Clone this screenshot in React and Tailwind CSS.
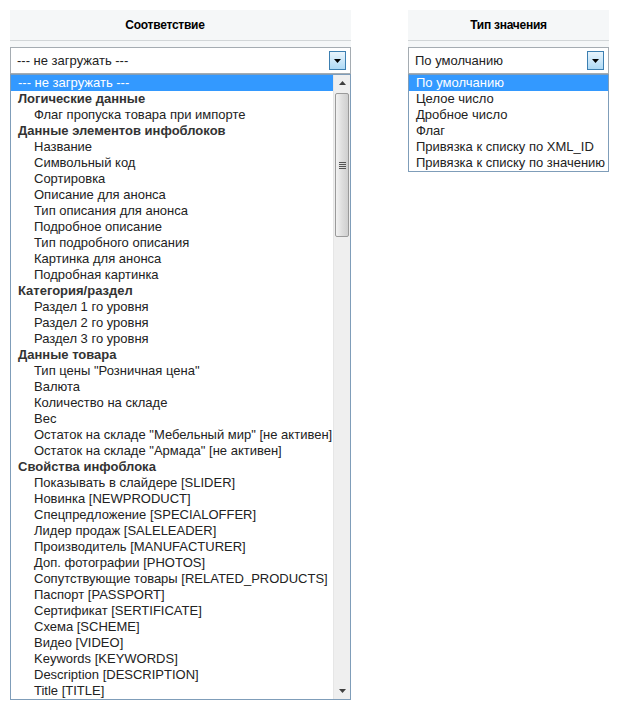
import React from "react";

const leftItems = [
  ["--- не загружать ---", "sel"],
  ["Логические данные", "g"],
  ["Флаг пропуска товара при импорте", "i"],
  ["Данные элементов инфоблоков", "g"],
  ["Название", "i"],
  ["Символьный код", "i"],
  ["Сортировка", "i"],
  ["Описание для анонса", "i"],
  ["Тип описания для анонса", "i"],
  ["Подробное описание", "i"],
  ["Тип подробного описания", "i"],
  ["Картинка для анонса", "i"],
  ["Подробная картинка", "i"],
  ["Категория/раздел", "g"],
  ["Раздел 1 го уровня", "i"],
  ["Раздел 2 го уровня", "i"],
  ["Раздел 3 го уровня", "i"],
  ["Данные товара", "g"],
  ["Тип цены \"Розничная цена\"", "i"],
  ["Валюта", "i"],
  ["Количество на складе", "i"],
  ["Вес", "i"],
  ["Остаток на складе \"Мебельный мир\" [не активен]", "i"],
  ["Остаток на складе \"Армада\" [не активен]", "i"],
  ["Свойства инфоблока", "g"],
  ["Показывать в слайдере [SLIDER]", "i"],
  ["Новинка [NEWPRODUCT]", "i"],
  ["Спецпредложение [SPECIALOFFER]", "i"],
  ["Лидер продаж [SALELEADER]", "i"],
  ["Производитель [MANUFACTURER]", "i"],
  ["Доп. фотографии [PHOTOS]", "i"],
  ["Сопутствующие товары [RELATED_PRODUCTS]", "i"],
  ["Паспорт [PASSPORT]", "i"],
  ["Сертификат [SERTIFICATE]", "i"],
  ["Схема [SCHEME]", "i"],
  ["Видео [VIDEO]", "i"],
  ["Keywords [KEYWORDS]", "i"],
  ["Description [DESCRIPTION]", "i"],
  ["Title [TITLE]", "i"],
];

const rightItems = [
  "По умолчанию",
  "Целое число",
  "Дробное число",
  "Флаг",
  "Привязка к списку по XML_ID",
  "Привязка к списку по значению",
];

function Header({ title, offset }) {
  return (
    <div className="bg-[#f5f7f8]">
      <div
        className={
          "h-[31px] flex items-center justify-center border-b border-[#d2d6d8] text-[12px] font-bold tracking-[-0.25px] text-black " +
          (offset ? "pr-[31px]" : "")
        }
      >
        {title}
      </div>
      <div className="h-[6px]" />
    </div>
  );
}

function SelectBox({ value }) {
  return (
    <div className="h-[27px] border border-[#a5acb2] bg-white flex items-center justify-between pl-[6px] pr-[4px]">
      <span className="text-[13px] text-[#222]">{value}</span>
      <div className="w-[17px] h-[19px] border border-[#3c7fb1] bg-gradient-to-b from-[#e8f4fc] to-[#aedaf6] flex items-center justify-center">
        <svg width="7" height="4" viewBox="0 0 7 4">
          <path d="M0 0H7L3.5 4Z" fill="#000" />
        </svg>
      </div>
    </div>
  );
}

function Scrollbar() {
  return (
    <div className="w-[17px] bg-[#efefef] flex flex-col shrink-0 border-l border-[#e6e6e6]">
      <div className="h-[16px] flex items-center justify-center">
        <svg width="7" height="4" viewBox="0 0 7 4">
          <path d="M0 4H7L3.5 0Z" fill="#404040" />
        </svg>
      </div>
      <div className="h-[2px]" />
      <div className="mx-[1px] h-[144px] rounded-[2px] border border-[#9a9a9a] bg-gradient-to-r from-[#f2f2f2] via-[#dedede] to-[#cfcfcf] flex items-center justify-center">
        <div className="flex flex-col gap-[1px]">
          <div className="w-[7px] h-[1px] bg-[#555]" />
          <div className="w-[7px] h-[1px] bg-[#555]" />
          <div className="w-[7px] h-[1px] bg-[#555]" />
          <div className="w-[7px] h-[1px] bg-[#555]" />
        </div>
      </div>
      <div className="flex-1" />
      <div className="h-[16px] flex items-center justify-center">
        <svg width="7" height="4" viewBox="0 0 7 4">
          <path d="M0 0H7L3.5 4Z" fill="#404040" />
        </svg>
      </div>
    </div>
  );
}

export default function App() {
  return (
    <div
      className="w-[620px] h-[710px] bg-white pt-[10px] pl-[10px] flex items-start"
      style={{ fontFamily: '"Liberation Sans", Arial, sans-serif' }}
    >
      <div className="w-[341px] shrink-0">
        <Header title="Соответствие" offset />
        <SelectBox value="--- не загружать ---" />
        <div className="border border-[#7f9db9] bg-white flex h-[626px]">
          <div className="flex-1 flex flex-col overflow-hidden">
            {leftItems.map(([t, k], i) => (
              <div
                key={i}
                className={
                  "h-[16px] leading-[16px] text-[13px] whitespace-nowrap " +
                  (k === "sel"
                    ? "bg-[#3399ff] text-white pl-[7px]"
                    : k === "g"
                    ? "font-bold text-[#333] pl-[7px]"
                    : "text-[#222] pl-[23px]")
                }
              >
                {t}
              </div>
            ))}
          </div>
          <Scrollbar />
        </div>
      </div>
      <div className="w-[201px] ml-[57px] shrink-0">
        <Header title="Тип значения" />
        <SelectBox value="По умолчанию" />
        <div className="border border-[#7f9db9] bg-white flex flex-col">
          {rightItems.map((t, i) => (
            <div
              key={i}
              className={
                "h-[16px] leading-[16px] text-[13px] whitespace-nowrap pl-[7px] " +
                (i === 0 ? "bg-[#3399ff] text-white" : "text-[#222]")
              }
            >
              {t}
            </div>
          ))}
        </div>
      </div>
    </div>
  );
}
